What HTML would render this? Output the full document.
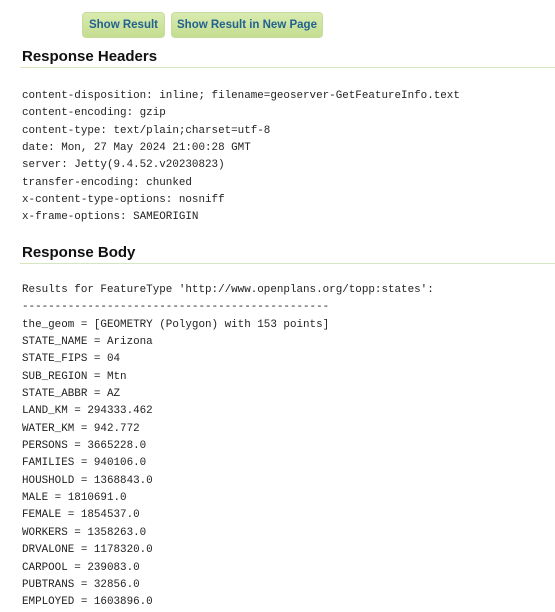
<!DOCTYPE html>
<html><head><style>
body{margin:0;background:#fff;width:555px;height:607px;overflow:hidden;font-family:"Liberation Sans",sans-serif;}
.btn{position:absolute;top:12px;height:26px;background:linear-gradient(#d9ebb0,#c3dd90);border:1px solid #c8dca0;border-radius:4px;box-sizing:border-box;color:#23628f;font-weight:bold;font-size:11.5px;line-height:24px;text-align:center;white-space:nowrap;}
h2{position:absolute;left:22px;margin:0;font-size:15px;font-weight:bold;color:#111;}
.line{position:absolute;left:20px;right:0;height:1px;background:#d8e6c0;}
pre{position:absolute;left:22px;margin:0;font-family:"Liberation Mono",monospace;font-size:10.9px;line-height:17.35px;color:#222;}
</style></head><body>
<div class="btn" style="left:82px;width:83px">Show Result</div>
<div class="btn" style="left:171px;width:152px">Show Result in New Page</div>
<h2 style="top:48px">Response Headers</h2>
<div class="line" style="top:67px"></div>
<pre style="top:88px">content-disposition: inline; filename=geoserver-GetFeatureInfo.text
content-encoding: gzip
content-type: text/plain;charset=utf-8
date: Mon, 27 May 2024 21:00:28 GMT
server: Jetty(9.4.52.v20230823)
transfer-encoding: chunked
x-content-type-options: nosniff
x-frame-options: SAMEORIGIN</pre>
<h2 style="top:244px">Response Body</h2>
<div class="line" style="top:263px"></div>
<pre style="top:282px">Results for FeatureType 'http://www.openplans.org/topp:states':
-----------------------------------------------
the_geom = [GEOMETRY (Polygon) with 153 points]
STATE_NAME = Arizona
STATE_FIPS = 04
SUB_REGION = Mtn
STATE_ABBR = AZ
LAND_KM = 294333.462
WATER_KM = 942.772
PERSONS = 3665228.0
FAMILIES = 940106.0
HOUSHOLD = 1368843.0
MALE = 1810691.0
FEMALE = 1854537.0
WORKERS = 1358263.0
DRVALONE = 1178320.0
CARPOOL = 239083.0
PUBTRANS = 32856.0
EMPLOYED = 1603896.0</pre>
</body></html>
